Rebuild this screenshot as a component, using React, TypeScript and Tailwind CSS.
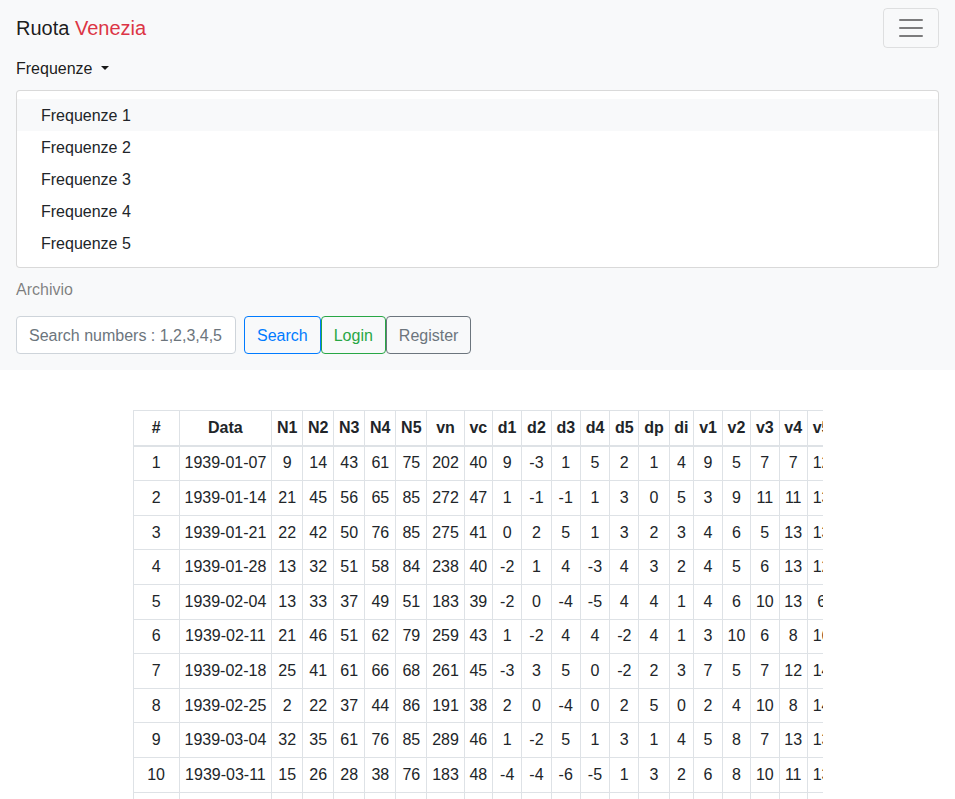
import React from "react";

const menu = ["Frequenze 1", "Frequenze 2", "Frequenze 3", "Frequenze 4", "Frequenze 5"];

const heads = ["#", "Data", "N1", "N2", "N3", "N4", "N5", "vn", "vc", "d1", "d2", "d3", "d4", "d5", "dp", "di", "v1", "v2", "v3", "v4", "v5"];

// date, numbers, vn, vc, d1..d5, dp, di, v1..v5
const rows: (string | number)[][] = [
    ["1939-01-07", 9, 14, 43, 61, 75, 202, 40, 9, -3, 1, 5, 2, 1, 4, 9, 5, 7, 7, 12],
    ["1939-01-14", 21, 45, 56, 65, 85, 272, 47, 1, -1, -1, 1, 3, 0, 5, 3, 9, 11, 11, 13],
    ["1939-01-21", 22, 42, 50, 76, 85, 275, 41, 0, 2, 5, 1, 3, 2, 3, 4, 6, 5, 13, 13],
    ["1939-01-28", 13, 32, 51, 58, 84, 238, 40, -2, 1, 4, -3, 4, 3, 2, 4, 5, 6, 13, 12],
    ["1939-02-04", 13, 33, 37, 49, 51, 183, 39, -2, 0, -4, -5, 4, 4, 1, 4, 6, 10, 13, 6],
    ["1939-02-11", 21, 46, 51, 62, 79, 259, 43, 1, -2, 4, 4, -2, 4, 1, 3, 10, 6, 8, 16],
    ["1939-02-18", 25, 41, 61, 66, 68, 261, 45, -3, 3, 5, 0, -2, 2, 3, 7, 5, 7, 12, 14],
    ["1939-02-25", 2, 22, 37, 44, 86, 191, 38, 2, 0, -4, 0, 2, 5, 0, 2, 4, 10, 8, 14],
    ["1939-03-04", 32, 35, 61, 76, 85, 289, 46, 1, -2, 5, 1, 3, 1, 4, 5, 8, 7, 13, 13],
    ["1939-03-11", 15, 26, 28, 38, 76, 183, 48, -4, -4, -6, -5, 1, 3, 2, 6, 8, 10, 11, 13],
    ["1939-03-18", 7, 19, 30, 54, 88, 198, 40, 3, 1, -3, 4, 2, 2, 3, 7, 10, 3, 9, 16],
];

const cell = "whitespace-nowrap border border-[#dee2e6] p-[4.8px] text-center align-top";

export default function App() {
    return (
        <div className="min-h-screen bg-white font-['Liberation_Sans',Arial,sans-serif] text-base leading-6 text-[#212529]">
            <nav className="bg-[#f8f9fa] px-4 py-2">
                <div className="flex items-center justify-between">
                    <a className="py-[5px] text-xl leading-[30px] text-black/90">
                        Ruota <span className="text-[#dc3545]">Venezia</span>
                    </a>
                    <button className="flex h-10 w-14 items-center justify-center rounded border border-black/10">
                        <svg width="30" height="30" viewBox="0 0 30 30">
                            <path
                                d="M4 7h22M4 15h22M4 23h22"
                                stroke="rgba(0,0,0,0.5)"
                                strokeWidth="2"
                                strokeLinecap="round"
                                strokeMiterlimit="10"
                            />
                        </svg>
                    </button>
                </div>
                <ul>
                    <li>
                        <a className="block pt-[9px] pb-[7px] text-black/90">
                            Frequenze
                            <span className="ml-2 inline-block h-0 w-0 border-x-[4.8px] border-t-[4.8px] border-b-0 border-solid border-x-transparent border-t-black/90 align-[4px]" />
                        </a>
                        <div className="mt-[2px] rounded border border-black/15 bg-white py-2">
                            {menu.map((m, i) => (
                                <div
                                    key={m}
                                    className={`px-6 pt-[5px] pb-[3px] text-[#212529] ${i === 0 ? "bg-[#f8f9fa]" : ""}`}
                                >
                                    {m}
                                </div>
                            ))}
                        </div>
                    </li>
                    <li>
                        <a className="block pt-[10px] pb-[6px] text-black/50">Archivio</a>
                    </li>
                </ul>
                <form className="my-2 flex items-center">
                    <input
                        placeholder="Search numbers : 1,2,3,4,5"
                        className="mr-2 h-[38px] w-[220px] rounded border border-[#ced4da] bg-white px-3 pt-[7px] pb-[5px] text-[#495057] placeholder:text-[#6c757d] outline-none"
                    />
                    <button type="button" className="h-[38px] rounded border border-[#007bff] px-3 pt-[2px] text-[#007bff]">
                        Search
                    </button>
                    <button type="button" className="h-[38px] rounded border border-[#28a745] px-3 pt-[2px] text-[#28a745]">
                        Login
                    </button>
                    <button type="button" className="h-[38px] rounded border border-[#6c757d] px-3 pt-[2px] text-[#6c757d]">
                        Register
                    </button>
                </form>
            </nav>

            <div className="mx-auto mt-10 w-[720px] px-[15px]">
                <div className="overflow-x-auto">
                    <table className="border-collapse">
                        <thead>
                            <tr>
                                {heads.map((h) => (
                                    <th key={h} className={`${cell} border-b-2 font-bold`}>
                                        {h === "#" ? <div className="min-w-[35.6px]">#</div> : h}
                                    </th>
                                ))}
                            </tr>
                        </thead>
                        <tbody>
                            {rows.map((r, i) => (
                                <tr key={i}>
                                    <td className={cell}>{i + 1}</td>
                                    {r.map((v, j) => (
                                        <td key={j} className={cell}>
                                            {v}
                                        </td>
                                    ))}
                                </tr>
                            ))}
                        </tbody>
                    </table>
                </div>
            </div>
        </div>
    );
}
